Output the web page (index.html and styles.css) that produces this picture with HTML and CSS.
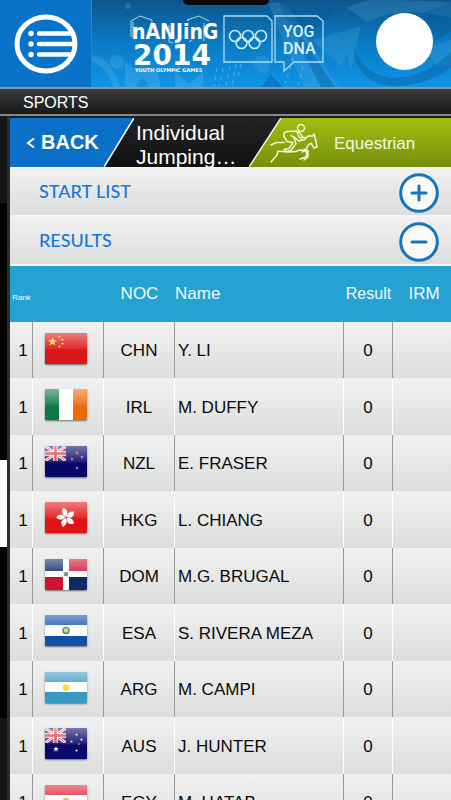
FILE: index.html
```html
<!DOCTYPE html>
<html lang="en">
<head>
  <meta charset="UTF-8">
  <meta name="viewport" content="width=device-width, initial-scale=1.0">
  <title>Nanjing 2014 - Equestrian Results</title>
  <link rel="stylesheet" href="styles.css">
</head>
<body>
  <!-- Shared flag artwork -->
  <svg class="defs" width="0" height="0" aria-hidden="true">
    <defs>
      <linearGradient id="gloss" x1="0" y1="0" x2="0" y2="1">
        <stop offset="0" stop-color="#fff" stop-opacity=".45"/>
        <stop offset=".5" stop-color="#fff" stop-opacity=".1"/>
        <stop offset=".55" stop-color="#fff" stop-opacity="0"/>
      </linearGradient>
      <symbol id="star" viewBox="0 0 20 20">
        <path d="M10 0l2.4 7.2H20l-6.200 4.500 2.400 7.300-6.200-4.500-6.200 4.500 2.400-7.300L0 7.200h7.600z"/>
      </symbol>
      <symbol id="jack" viewBox="0 0 21 15">
        <rect width="21" height="15" fill="#22227a"/>
        <path d="M0 0l21 15M21 0L0 15" stroke="#fff" stroke-width="3"/>
        <path d="M0 0l21 15M21 0L0 15" stroke="#e0404a" stroke-width="1"/>
        <path d="M10.500 0v15M0 7.500h21" stroke="#fff" stroke-width="4.500"/>
        <path d="M10.500 0v15M0 7.500h21" stroke="#e03540" stroke-width="2.500"/>
      </symbol>
    </defs>
  </svg>

  <div class="app">
    <!-- Header -->
    <header class="banner">
      <svg class="banner-art" viewBox="0 0 360 87" preserveAspectRatio="xMinYMin slice" aria-hidden="true">
        <defs>
          <linearGradient id="sky" x1="0" y1="0" x2="0" y2="1">
            <stop offset="0" stop-color="#0d568c"/>
            <stop offset=".5" stop-color="#0a7bc4"/>
            <stop offset="1" stop-color="#1094e6"/>
          </linearGradient>
        </defs>
        <rect width="360" height="87" fill="url(#sky)"/>
        <g fill="#6fc0ee" opacity=".25">
          <path d="M0 55C18 58 22 70 30 87H22C18 72 10 64 0 62z"/>
          <circle cx="26" cy="62" r="7"/>
          <circle cx="37" cy="6" r="3"/>
          <path d="M34 62l12 8 20-2 4 19H58l-6-10-8 10H34z"/>
          <path d="M84 72l14 12 14-12v15H84z"/>
        </g>
        <g fill="#5fb4e4" opacity=".22">
          <path d="M178 4q12-6 24 10l16 26 18 30 12 17h-34l-20-40z"/>
          <path d="M222 40l48-14-10 44-4-16-6 12z"/>
          <path d="M160 62q8-10 18-4v10q-2 8-10 4z"/>
          <path d="M256 8q20-12 50-8l54 2v16q-50-14-84 4z"/>
          <path d="M334 48l26-8v26l-14 0z"/>
        </g>
        <g fill="#075a99" opacity=".4">
          <path d="M188 0q4 24 24 32 26-4 34-32h-12q-4 16-20 18-12-4-14-18z"/>
          <path d="M206 30l38 57h-14l-22-42z"/>
          <path d="M262 42q4 30 38 36 34 0 60-26v16q-30 20-62 18-36-6-36-44z"/>
          <path d="M170 87l10-12 12 12z"/>
          <path d="M334 12l26-10v30l-16 8z"/>
        </g>
        <g stroke="#8fd2fa" opacity=".5" stroke-dasharray="4 4">
          <path d="M126 68l-3 19M132 68l-4 18M139 66l-4 20M145 64l-4 22M150 64l-3 14M202 58l-8 26M212 66l-5 20"/>
        </g>
      </svg>

      <button class="menu-btn" aria-label="Menu">
        <svg width="64" height="60" viewBox="0 0 64 60">
          <ellipse cx="32" cy="30" rx="29" ry="27" fill="none" stroke="#fff" stroke-width="5"/>
          <g fill="#fff">
            <circle cx="17" cy="19.500" r="2.700"/>
            <circle cx="17" cy="30" r="2.700"/>
            <circle cx="17" cy="40.500" r="2.700"/>
          </g>
          <path d="M25 19.500h32M25 30h35M25 40.500h32" stroke="#fff" stroke-width="4.500" stroke-linecap="round"/>
        </svg>
      </button>

      <div class="brand">
        <svg class="wordmark" width="92" height="62" viewBox="0 0 92 62" role="img" aria-label="Nanjing 2014 Youth Olympic Games">
          <g fill="none" stroke="#d5ecfa" stroke-width="1" opacity=".8">
            <path d="M2 24V8l9-5 12 4v4M4 26V9M60 8l-2-1 12-4 10 5M44 30l-4-1V12M60 29l3-2M75 28V10"/>
          </g>
          <text class="wordmark-nanjing" x="3" y="26">nANJinG</text>
          <text class="wordmark-year" x="4" y="52">2014</text>
          <text class="wordmark-sub" x="6" y="59">YOUTH OLYMPIC GAMES</text>
        </svg>
        <svg class="plates" width="102" height="60" viewBox="0 0 102 60" role="img" aria-label="Olympic rings, YOG DNA">
          <g fill="none" stroke="#a9dcf7" stroke-width="1.300">
            <path d="M1 3h43l5 5v41H1z"/>
            <path d="M52 3h42l6 5v41H71l-10 9v-9h-9z"/>
          </g>
          <g fill="none" stroke="#c8eafb" stroke-width="1.600">
            <circle cx="12" cy="23" r="5.500"/>
            <circle cx="25" cy="23" r="5.500"/>
            <circle cx="38" cy="23" r="5.500"/>
            <circle cx="18.500" cy="30" r="5.500"/>
            <circle cx="31.500" cy="30" r="5.500"/>
          </g>
          <text x="60" y="24">YOG</text>
          <text x="60" y="41">DNA</text>
        </svg>
      </div>

      <div class="avatar"></div>
    </header>

    <div class="section-bar">SPORTS</div>

    <div class="main">
      <!-- Edge of the side drawer -->
      <aside class="drawer">
        <div class="drawer-head"></div>
        <div class="drawer-selected"></div>
        <div class="drawer-item"></div>
        <div class="drawer-foot"></div>
      </aside>

      <main class="content">
        <nav class="crumbs">
          <button class="back-btn">
            <svg width="9" height="12" viewBox="0 0 9 12" aria-hidden="true"><path d="M8 1.500L2 6l6 4.500" fill="none" stroke="#fff" stroke-width="2"/></svg>
            BACK
          </button>
          <svg class="slant" width="30" height="49" viewBox="0 0 30 49" aria-hidden="true">
            <path d="M0 0h30L0 49z" fill="#0a70c8"/>
            <path d="M30 0L0 49" stroke="#fff" stroke-width="1.500"/>
          </svg>
          <h1>Individual<br>Jumping…</h1>
          <svg class="slant" width="32" height="49" viewBox="0 0 32 49" aria-hidden="true">
            <defs>
              <linearGradient id="lime" x1="0" y1="0" x2="0" y2="1">
                <stop offset="0" stop-color="#a3be10"/>
                <stop offset="1" stop-color="#76900c"/>
              </linearGradient>
            </defs>
            <path d="M32 0v49H0z" fill="url(#lime)"/>
            <path d="M32 0L0 49" stroke="#f4f8dc" stroke-width="1.500"/>
          </svg>
          <a class="sport" href="#">
            <svg class="rider" width="48" height="40" viewBox="0 0 48 40" aria-hidden="true">
              <g fill="none" stroke="#f2f7cf" stroke-width="1.500" stroke-linecap="round" stroke-linejoin="round">
                <circle cx="31" cy="5" r="3.500"/>
                <path d="M27 8L17 8.500q-4 1-3 5l3 5 6 1-4 6-5 1 2 2 5-1 5-7-2-6-3-2M24 14l5 4 4-1-4-3-2-5q4 0 5 5l4 1"/>
                <path d="M34 17l4-4 5 0 1-2 1 3 2 10-3 1-3-5-3 2-2 5-4 2"/>
                <path d="M1 22l5-2.500 8 0M8 28q6 1 12 1t10-2q5 0 7 3l-1 4-6 2M34 26l4 2 0 6-4 3M8 28l-1 4-6 7"/>
              </g>
            </svg>
            <span>Equestrian</span>
          </a>
        </nav>

        <!-- Accordion -->
        <div class="panel">
          <h2>START LIST</h2>
          <button class="toggle" aria-label="Expand start list" aria-expanded="false">
            <svg width="40" height="40" viewBox="0 0 40 40"><circle cx="20" cy="20" r="18.300"/><path d="M13 20h14M20 13v14"/></svg>
          </button>
        </div>
        <div class="panel">
          <h2>RESULTS</h2>
          <button class="toggle" aria-label="Collapse results" aria-expanded="true">
            <svg width="40" height="40" viewBox="0 0 40 40"><circle cx="20" cy="20" r="18.300"/><path d="M13 20h14"/></svg>
          </button>
        </div>

        <table class="results">
          <colgroup>
            <col class="col-rank">
            <col class="col-flag">
            <col class="col-noc">
            <col class="col-name">
            <col class="col-result">
            <col class="col-irm">
          </colgroup>
          <thead>
            <tr>
              <th class="rank">Rank</th>
              <th></th>
              <th>NOC</th>
              <th class="name">Name</th>
              <th class="result">Result</th>
              <th class="irm">IRM</th>
            </tr>
          </thead>
          <tbody>
            <tr>
              <td>1</td>
              <td>
                <svg class="flag" width="42" height="31" viewBox="0 0 42 31">
                  <rect width="42" height="31" fill="#dc1616"/>
                  <g fill="#ffde30">
                    <use href="#star" x="3" y="4" width="9" height="9"/>
                    <use href="#star" x="13" y="2" width="3" height="3"/>
                    <use href="#star" x="16" y="5" width="3" height="3"/>
                    <use href="#star" x="16" y="9" width="3" height="3"/>
                    <use href="#star" x="13" y="12" width="3" height="3"/>
                  </g>
                  <rect width="42" height="31" fill="url(#gloss)"/>
                </svg>
              </td>
              <td>CHN</td>
              <td class="name">Y. LI</td>
              <td>0</td>
              <td></td>
            </tr>
            <tr>
              <td>1</td>
              <td>
                <svg class="flag" width="42" height="31" viewBox="0 0 42 31">
                  <rect width="42" height="31" fill="#fff"/>
                  <rect width="14" height="31" fill="#0a7a42"/>
                  <rect x="28" width="14" height="31" fill="#ea6a0a"/>
                  <rect width="42" height="31" fill="url(#gloss)"/>
                </svg>
              </td>
              <td>IRL</td>
              <td class="name">M. DUFFY</td>
              <td>0</td>
              <td></td>
            </tr>
            <tr>
              <td>1</td>
              <td>
                <svg class="flag" width="42" height="31" viewBox="0 0 42 31">
                  <rect width="42" height="31" fill="#08086a"/>
                  <use href="#jack" width="21" height="15"/>
                  <g fill="#e06a8a">
                    <use href="#star" x="30" y="5" width="4" height="4"/>
                    <use href="#star" x="35" y="9" width="4" height="4"/>
                    <use href="#star" x="25" y="11" width="4" height="4"/>
                    <use href="#star" x="30" y="20" width="4" height="4"/>
                  </g>
                  <rect width="42" height="31" fill="url(#gloss)"/>
                </svg>
              </td>
              <td>NZL</td>
              <td class="name">E. FRASER</td>
              <td>0</td>
              <td></td>
            </tr>
            <tr>
              <td>1</td>
              <td>
                <svg class="flag" width="42" height="31" viewBox="0 0 42 31">
                  <defs><path id="petal" d="M21 15q-6-3-3-9 7 2 3 9z"/></defs>
                  <rect width="42" height="31" fill="#e01414"/>
                  <g fill="#fff">
                    <use href="#petal"/>
                    <use href="#petal" transform="rotate(72 21 15.500)"/>
                    <use href="#petal" transform="rotate(144 21 15.500)"/>
                    <use href="#petal" transform="rotate(216 21 15.500)"/>
                    <use href="#petal" transform="rotate(288 21 15.500)"/>
                  </g>
                  <rect width="42" height="31" fill="url(#gloss)"/>
                </svg>
              </td>
              <td>HKG</td>
              <td class="name">L. CHIANG</td>
              <td>0</td>
              <td></td>
            </tr>
            <tr>
              <td>1</td>
              <td>
                <svg class="flag" width="42" height="31" viewBox="0 0 42 31">
                  <rect width="42" height="31" fill="#fff"/>
                  <path d="M0 0h18v12H0zM24 18h18v13H24z" fill="#0a2c62"/>
                  <path d="M24 0h18v12H24zM0 18h18v13H0z" fill="#ce1230"/>
                  <circle cx="21" cy="15" r="2.300" fill="#777f70"/>
                  <rect width="42" height="31" fill="url(#gloss)"/>
                </svg>
              </td>
              <td>DOM</td>
              <td class="name">M.G. BRUGAL</td>
              <td>0</td>
              <td></td>
            </tr>
            <tr>
              <td>1</td>
              <td>
                <svg class="flag" width="42" height="31" viewBox="0 0 42 31">
                  <rect width="42" height="31" fill="#1050a4"/>
                  <rect y="10" width="42" height="11" fill="#fff"/>
                  <circle cx="21" cy="15.500" r="3" fill="#cfd890" stroke="#3c8a72" stroke-width="1.500"/>
                  <rect width="42" height="31" fill="url(#gloss)"/>
                </svg>
              </td>
              <td>ESA</td>
              <td class="name">S. RIVERA MEZA</td>
              <td>0</td>
              <td></td>
            </tr>
            <tr>
              <td>1</td>
              <td>
                <svg class="flag" width="42" height="31" viewBox="0 0 42 31">
                  <rect width="42" height="31" fill="#3a98c4"/>
                  <rect y="10" width="42" height="10" fill="#fff"/>
                  <circle cx="21" cy="15.500" r="3.300" fill="#f4dc20"/>
                  <rect width="42" height="31" fill="url(#gloss)"/>
                </svg>
              </td>
              <td>ARG</td>
              <td class="name">M. CAMPI</td>
              <td>0</td>
              <td></td>
            </tr>
            <tr>
              <td>1</td>
              <td>
                <svg class="flag" width="42" height="31" viewBox="0 0 42 31">
                  <rect width="42" height="31" fill="#08086a"/>
                  <use href="#jack" width="21" height="15"/>
                  <g fill="#fff">
                    <use href="#star" x="8" y="18" width="6" height="6"/>
                    <use href="#star" x="30" y="5" width="3" height="3"/>
                    <use href="#star" x="35" y="10" width="3" height="3"/>
                    <use href="#star" x="25" y="12" width="3" height="3"/>
                    <use href="#star" x="33" y="15" width="2" height="2"/>
                    <use href="#star" x="30" y="21" width="3" height="3"/>
                  </g>
                  <rect width="42" height="31" fill="url(#gloss)"/>
                </svg>
              </td>
              <td>AUS</td>
              <td class="name">J. HUNTER</td>
              <td>0</td>
              <td></td>
            </tr>
            <tr>
              <td>1</td>
              <td>
                <svg class="flag" width="42" height="31" viewBox="0 0 42 31">
                  <rect width="42" height="31" fill="#fff"/>
                  <rect width="42" height="10" fill="#e02236"/>
                  <rect y="21" width="42" height="10" fill="#111"/>
                  <path d="M18 13h6l-1 6h-4z" fill="#d8b860"/>
                  <rect width="42" height="31" fill="url(#gloss)"/>
                </svg>
              </td>
              <td>EGY</td>
              <td class="name">M. HATAB</td>
              <td>0</td>
              <td></td>
            </tr>
          </tbody>
        </table>
      </main>
    </div>
    <div class="notch"></div>
  </div>
</body>
</html>
```
FILE: styles.css
```css
* {
  margin: 0;
  padding: 0;
  box-sizing: border-box;
}

:root {
  --blue: #0a70c8;
  --link-blue: #1478dc;
  --table-blue: #26a2d2;
  --row-line: #999;
}

body {
  background-color: #000;
  color: #0a0a0a;
  font-family: 'Liberation Sans', Arial, sans-serif;
  font-size: 17px;
}

button {
  border: 0;
  background: none;
  font-family: inherit;
  cursor: pointer;
}

svg {
  display: block;
  flex-shrink: 0;
}

.defs {
  position: absolute;
}

.app {
  position: relative;
  display: flex;
  flex-direction: column;
  height: 100vh;
  overflow: hidden;
}

/* Header */
.banner {
  position: relative;
  display: flex;
  align-items: center;
  flex-shrink: 0;
  height: 87px;
  padding-right: 18px;
  overflow: hidden;
}

.banner-art {
  position: absolute;
  top: 0;
  left: 91px;
  width: calc(100% - 91px);
  height: 100%;
}

.menu-btn {
  position: relative;
  display: flex;
  align-items: center;
  justify-content: center;
  width: 92px;
  height: 100%;
  background-color: #0873c9;
  border-right: 1px solid #1a8be0;
}

.brand {
  position: relative;
  display: flex;
  gap: 2px;
  margin: 0 auto 0 37px;
}

.wordmark text {
  fill: #fff;
  font-family: 'DejaVu Sans', sans-serif;
  font-weight: bold;
}

.wordmark .wordmark-nanjing {
  font-family: 'DejaVu Sans Condensed', 'DejaVu Sans', sans-serif;
  font-size: 21px;
}

.wordmark .wordmark-year {
  font-size: 28px;
}

.wordmark .wordmark-sub {
  font-size: 5px;
}

.plates text {
  fill: #d8f0fc;
  font-family: Roboto, sans-serif;
  font-size: 16px;
  font-weight: 500;
}

.avatar {
  position: relative;
  width: 57px;
  height: 57px;
  margin-bottom: 4px;
  border-radius: 50%;
  background-color: #fff;
}

.notch {
  position: absolute;
  top: 0;
  left: 50%;
  width: 86px;
  height: 5px;
  margin-left: -43px;
  border-radius: 0 0 6px 6px;
  background-color: #0a0a0a;
}

.section-bar {
  flex-shrink: 0;
  height: 29px;
  padding-left: 23px;
  border-top: 2px solid #8f9499;
  border-bottom: 2px solid #85888a;
  background: linear-gradient(#3a3a3c, #19191b);
  color: #fff;
  font-size: 16px;
  line-height: 27px;
}

.main {
  display: flex;
  flex: 1;
  min-height: 0;
}

/* Side drawer */
.drawer {
  display: flex;
  flex-direction: column;
  flex-shrink: 0;
  width: 10px;
  border-right: 3px solid #2d2d2d;
}

.drawer-head {
  height: 87px;
  background-color: #151515;
}

.drawer-selected {
  height: 87px;
  margin-top: 257px;
  background-color: #fff;
}

.drawer-item {
  height: 171px;
}

.drawer-foot {
  flex: 1;
  background-color: #151515;
}

.content {
  flex: 1;
  min-width: 0;
  padding-top: 2px;
  background-color: #1c1c1e;
}

/* Breadcrumb tabs */
.crumbs {
  display: flex;
  height: 50px;
  border-bottom: 1px solid #f4f4f4;
  background: linear-gradient(#232326, #111113);
}

.back-btn {
  display: flex;
  align-items: center;
  gap: 6px;
  width: 94px;
  padding-left: 16px;
  background-color: var(--blue);
  color: #fff;
  font-size: 20px;
  font-weight: bold;
  white-space: nowrap;
}

.crumbs h1 {
  width: 115px;
  padding: 3px 0 0 2px;
  color: #fff;
  font-size: 21px;
  font-weight: normal;
  line-height: 24px;
}

.sport {
  display: flex;
  align-items: center;
  flex: 1;
  gap: 16px;
  background: linear-gradient(#a3be10, #76900c);
  color: #f6fae0;
  text-decoration: none;
}

.sport span {
  padding-top: 2px;
}

.rider {
  margin-left: -11px;
}

/* Accordion */
.panel {
  display: flex;
  align-items: center;
  justify-content: space-between;
  height: 49px;
  padding: 2px 12px 0 29px;
  border-bottom: 2px solid #f6f6f6;
  background: linear-gradient(#f1f1f2, #dcdddd);
}

.panel h2 {
  padding-bottom: 4px;
  color: var(--link-blue);
  font-family: Lato, sans-serif;
  font-size: 18px;
  font-weight: 500;
}

.toggle circle {
  fill: #fafafa;
  stroke: #1474c0;
  stroke-width: 3;
}

.toggle path {
  stroke: #1474c0;
  stroke-width: 3;
  stroke-linecap: round;
}

/* Results table */
.results {
  width: 100%;
  border-collapse: separate;
  border-spacing: 0;
  table-layout: fixed;
}

.col-rank {
  width: 23px;
}

.col-flag,
.col-noc {
  width: 71px;
}

.col-result {
  width: 49px;
}

.col-irm {
  width: 58px;
}

.results th {
  height: 56px;
  background-color: var(--table-blue);
  color: #effaff;
  font-weight: normal;
  white-space: nowrap;
}

.results .name {
  text-align: left;
}

.results th.rank {
  padding-top: 6px;
  font-size: 8px;
}

.results th.result {
  font-size: 16px;
}

.results th.irm {
  padding-left: 4px;
}

.results td {
  height: 56px;
  padding-top: 2px;
  border-right: 1px solid var(--row-line);
  background: linear-gradient(#f1f1f1, #dcdddd);
  text-align: center;
  white-space: nowrap;
}

.results td:first-child {
  padding-left: 4px;
}

.results td:nth-child(2) {
  padding-right: 4px;
}

.results td.name {
  padding-left: 3px;
}

.results tr:nth-child(even) td {
  height: 57px;
  border-right-color: #fff;
}

.results td:last-child {
  border-right: 0;
}

.flag {
  margin: 0 auto 6px;
  border-radius: 1px;
  box-shadow: 0 1px 2px rgba(0, 0, 0, 0.5);
}
```
